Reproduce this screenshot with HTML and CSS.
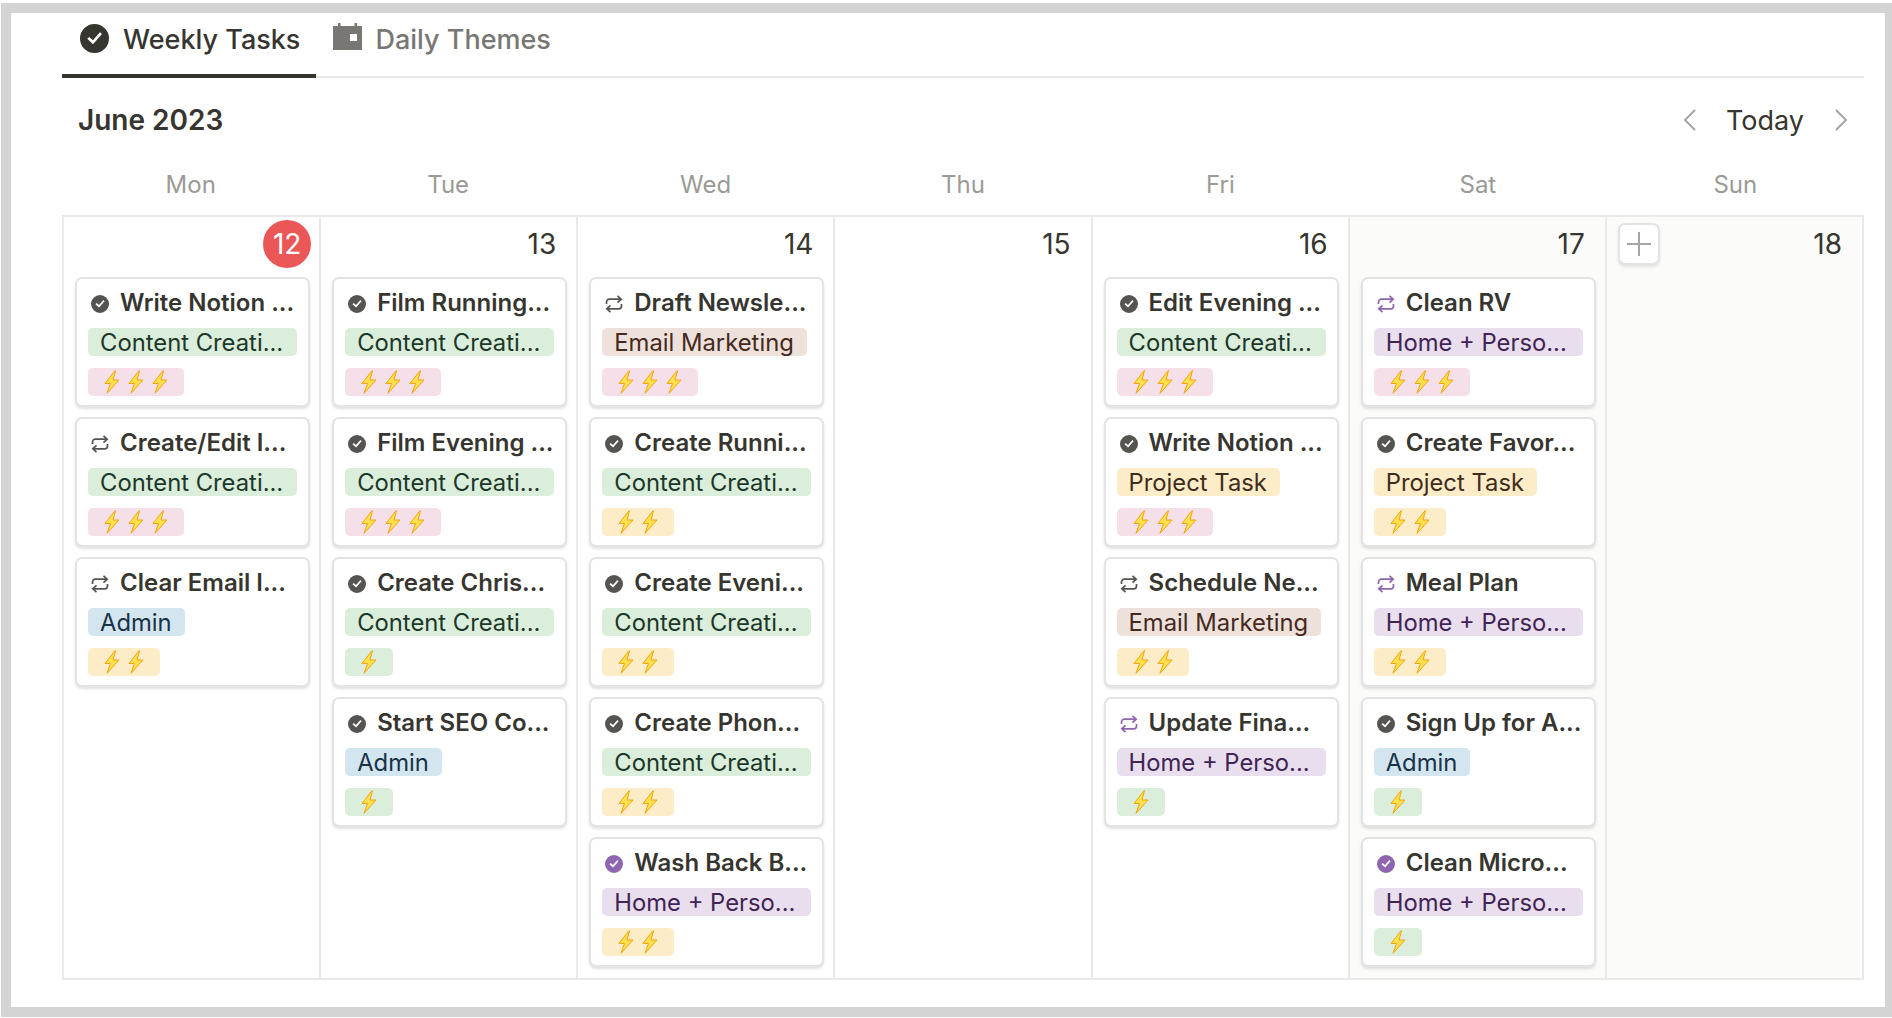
FILE: index.html
```html
<!DOCTYPE html>
<html lang="en">

<head>
  <meta charset="UTF-8">
  <meta name="viewport" content="width=device-width, initial-scale=1.0">
  <title>Weekly Tasks</title>
  <link rel="stylesheet" href="styles.css">
</head>

<body>

  <svg class="defs" width="0" height="0">
    <symbol id="check" viewBox="0 0 18 18">
      <path fill-rule="evenodd" d="M9 0a9 9 0 1 1 0 18A9 9 0 0 1 9 0zm4.600 6.200-1.200-1.100-4.400 5-2.300-2.100-1.200 1.200 3.600 3.400z"/>
    </symbol>
    <symbol id="repeat" viewBox="0 0 18 18">
      <path fill="none" stroke="currentColor" stroke-width="1.700" d="M1.500 9V7c0-1.600 1.200-2.800 2.800-2.800H16M12.500 .8l3.700 3.400-3.700 3.400M16.500 9v2c0 1.600-1.200 2.800-2.800 2.800H2M5.500 10.400 1.800 13.800l3.700 3.400"/>
    </symbol>
    <symbol id="bolt" viewBox="0 0 16 24">
      <path fill="#ffe14d" stroke="#f7a30f" stroke-width="1" stroke-linejoin="round" d="M11 .7 1 13.500H6.500L3 23.300 15 10H9L11.500 .7z"/>
    </symbol>
    <symbol id="calendar" viewBox="0 0 29 27">
      <path fill-rule="evenodd" d="M5 0h2.500v3h14V0H24v3h5v24H0V3h5zm12 11v7h7v-7z"/>
    </symbol>
    <symbol id="chev-left" viewBox="0 0 13 22">
      <path fill="none" stroke="currentColor" stroke-width="2" d="M12 1 2 11l10 10"/>
    </symbol>
    <symbol id="chev-right" viewBox="0 0 13 22">
      <path fill="none" stroke="currentColor" stroke-width="2" d="m1 1 10 10L1 21"/>
    </symbol>
  </svg>

  <div class="frame">

    <div class="tabs">
      <div class="tab tab-active">
        <svg class="tab-icon"><use href="#check"/></svg>
        <span>Weekly Tasks</span>
      </div>
      <div class="tab">
        <svg class="tab-icon tab-icon-cal"><use href="#calendar"/></svg>
        <span>Daily Themes</span>
      </div>
    </div>

    <div class="month-row">
      <div class="month">June 2023</div>
      <div class="nav">
        <svg class="chev"><use href="#chev-left"/></svg>
        <span class="today">Today</span>
        <svg class="chev"><use href="#chev-right"/></svg>
      </div>
    </div>

    <div class="weekdays">
      <div>Mon</div>
      <div>Tue</div>
      <div>Wed</div>
      <div>Thu</div>
      <div>Fri</div>
      <div>Sat</div>
      <div>Sun</div>
    </div>

    <div class="grid">

      <!-- Mon -->
      <div class="day">
        <div class="date"><span class="date-today">12</span></div>

        <div class="card">
          <div class="title"><svg class="ico"><use href="#check"/></svg><span>Write Notion ...</span></div>
          <div class="tag green">Content Creati...</div>
          <div class="tag bolts pink"><svg><use href="#bolt"/></svg><svg><use href="#bolt"/></svg><svg><use href="#bolt"/></svg></div>
        </div>

        <div class="card">
          <div class="title"><svg class="ico"><use href="#repeat"/></svg><span>Create/Edit I...</span></div>
          <div class="tag green">Content Creati...</div>
          <div class="tag bolts pink"><svg><use href="#bolt"/></svg><svg><use href="#bolt"/></svg><svg><use href="#bolt"/></svg></div>
        </div>

        <div class="card">
          <div class="title"><svg class="ico"><use href="#repeat"/></svg><span>Clear Email I...</span></div>
          <div class="tag blue">Admin</div>
          <div class="tag bolts yellow"><svg><use href="#bolt"/></svg><svg><use href="#bolt"/></svg></div>
        </div>
      </div>

      <!-- Tue -->
      <div class="day">
        <div class="date">13</div>

        <div class="card">
          <div class="title"><svg class="ico"><use href="#check"/></svg><span>Film Running...</span></div>
          <div class="tag green">Content Creati...</div>
          <div class="tag bolts pink"><svg><use href="#bolt"/></svg><svg><use href="#bolt"/></svg><svg><use href="#bolt"/></svg></div>
        </div>

        <div class="card">
          <div class="title"><svg class="ico"><use href="#check"/></svg><span>Film Evening ...</span></div>
          <div class="tag green">Content Creati...</div>
          <div class="tag bolts pink"><svg><use href="#bolt"/></svg><svg><use href="#bolt"/></svg><svg><use href="#bolt"/></svg></div>
        </div>

        <div class="card">
          <div class="title"><svg class="ico"><use href="#check"/></svg><span>Create Chris...</span></div>
          <div class="tag green">Content Creati...</div>
          <div class="tag bolts green"><svg><use href="#bolt"/></svg></div>
        </div>

        <div class="card">
          <div class="title"><svg class="ico"><use href="#check"/></svg><span>Start SEO Co...</span></div>
          <div class="tag blue">Admin</div>
          <div class="tag bolts green"><svg><use href="#bolt"/></svg></div>
        </div>
      </div>

      <!-- Wed -->
      <div class="day">
        <div class="date">14</div>

        <div class="card">
          <div class="title"><svg class="ico"><use href="#repeat"/></svg><span>Draft Newsle...</span></div>
          <div class="tag brown">Email Marketing</div>
          <div class="tag bolts pink"><svg><use href="#bolt"/></svg><svg><use href="#bolt"/></svg><svg><use href="#bolt"/></svg></div>
        </div>

        <div class="card">
          <div class="title"><svg class="ico"><use href="#check"/></svg><span>Create Runni...</span></div>
          <div class="tag green">Content Creati...</div>
          <div class="tag bolts yellow"><svg><use href="#bolt"/></svg><svg><use href="#bolt"/></svg></div>
        </div>

        <div class="card">
          <div class="title"><svg class="ico"><use href="#check"/></svg><span>Create Eveni...</span></div>
          <div class="tag green">Content Creati...</div>
          <div class="tag bolts yellow"><svg><use href="#bolt"/></svg><svg><use href="#bolt"/></svg></div>
        </div>

        <div class="card">
          <div class="title"><svg class="ico"><use href="#check"/></svg><span>Create Phon...</span></div>
          <div class="tag green">Content Creati...</div>
          <div class="tag bolts yellow"><svg><use href="#bolt"/></svg><svg><use href="#bolt"/></svg></div>
        </div>

        <div class="card">
          <div class="title"><svg class="ico ico-purple"><use href="#check"/></svg><span>Wash Back B...</span></div>
          <div class="tag purple">Home + Perso...</div>
          <div class="tag bolts yellow"><svg><use href="#bolt"/></svg><svg><use href="#bolt"/></svg></div>
        </div>
      </div>

      <!-- Thu -->
      <div class="day">
        <div class="date">15</div>
      </div>

      <!-- Fri -->
      <div class="day">
        <div class="date">16</div>

        <div class="card">
          <div class="title"><svg class="ico"><use href="#check"/></svg><span>Edit Evening ...</span></div>
          <div class="tag green">Content Creati...</div>
          <div class="tag bolts pink"><svg><use href="#bolt"/></svg><svg><use href="#bolt"/></svg><svg><use href="#bolt"/></svg></div>
        </div>

        <div class="card">
          <div class="title"><svg class="ico"><use href="#check"/></svg><span>Write Notion ...</span></div>
          <div class="tag yellow">Project Task</div>
          <div class="tag bolts pink"><svg><use href="#bolt"/></svg><svg><use href="#bolt"/></svg><svg><use href="#bolt"/></svg></div>
        </div>

        <div class="card">
          <div class="title"><svg class="ico"><use href="#repeat"/></svg><span>Schedule Ne...</span></div>
          <div class="tag brown">Email Marketing</div>
          <div class="tag bolts yellow"><svg><use href="#bolt"/></svg><svg><use href="#bolt"/></svg></div>
        </div>

        <div class="card">
          <div class="title"><svg class="ico ico-purple"><use href="#repeat"/></svg><span>Update Fina...</span></div>
          <div class="tag purple">Home + Perso...</div>
          <div class="tag bolts green"><svg><use href="#bolt"/></svg></div>
        </div>
      </div>

      <!-- Sat -->
      <div class="day weekend">
        <div class="date">17</div>

        <div class="card">
          <div class="title"><svg class="ico ico-purple"><use href="#repeat"/></svg><span>Clean RV</span></div>
          <div class="tag purple">Home + Perso...</div>
          <div class="tag bolts pink"><svg><use href="#bolt"/></svg><svg><use href="#bolt"/></svg><svg><use href="#bolt"/></svg></div>
        </div>

        <div class="card">
          <div class="title"><svg class="ico"><use href="#check"/></svg><span>Create Favor...</span></div>
          <div class="tag yellow">Project Task</div>
          <div class="tag bolts yellow"><svg><use href="#bolt"/></svg><svg><use href="#bolt"/></svg></div>
        </div>

        <div class="card">
          <div class="title"><svg class="ico ico-purple"><use href="#repeat"/></svg><span>Meal Plan</span></div>
          <div class="tag purple">Home + Perso...</div>
          <div class="tag bolts yellow"><svg><use href="#bolt"/></svg><svg><use href="#bolt"/></svg></div>
        </div>

        <div class="card">
          <div class="title"><svg class="ico"><use href="#check"/></svg><span>Sign Up for A...</span></div>
          <div class="tag blue">Admin</div>
          <div class="tag bolts green"><svg><use href="#bolt"/></svg></div>
        </div>

        <div class="card">
          <div class="title"><svg class="ico ico-purple"><use href="#check"/></svg><span>Clean Micro...</span></div>
          <div class="tag purple">Home + Perso...</div>
          <div class="tag bolts green"><svg><use href="#bolt"/></svg></div>
        </div>
      </div>

      <!-- Sun -->
      <div class="day weekend">
        <div class="date date-add">
          <div class="add-btn">
            <svg width="24" height="24" viewBox="0 0 24 24"><path fill="none" stroke="currentColor" stroke-width="2" d="M12 0v24M0 12h24"/></svg>
          </div>
          <span>18</span>
        </div>
      </div>

    </div>
  </div>

</body>

</html>
```
FILE: styles.css
```css
:root {
  --ink: #37352f;
  --grey: #9b9a97;
  --line: #e9e9e7;
  --frame: #d4d4d4;
}

* {
  margin: 0;
  padding: 0;
  box-sizing: border-box;
}

body {
  background: #fff;
  font-family: Inter, "Noto Sans", sans-serif;
  color: var(--ink);
}

.defs {
  position: absolute;
}

.frame {
  height: 1014px;
  margin: 3px 0 0 1px;
  padding: 0 21px 0 51px;
  border: 10px solid var(--frame);
  border-right-width: 7px;
  background: #fff;
}

/* tabs */

.tabs {
  display: flex;
  height: 65px;
  border-bottom: 2px solid var(--line);
}

.tab {
  display: flex;
  align-items: center;
  gap: 13px;
  height: 65px;
  padding: 0 17px 12px;
  font-size: 27px;
  font-weight: 500;
  color: #787774;
}

.tab-active {
  padding: 0 16px 8px 18px;
  gap: 14px;
  color: var(--ink);
  border-bottom: 4px solid var(--ink);
}

.tab-icon {
  width: 29px;
  height: 29px;
  margin-top: -2px;
  fill: currentColor;
}

.tab-icon-cal {
  margin-top: -6px;
}

/* month header */

.month-row {
  display: flex;
  justify-content: space-between;
  align-items: center;
  height: 84px;
  padding: 0 16px 0 16px;
}

.month {
  font-size: 28px;
  font-weight: 600;
}

.nav {
  display: flex;
  align-items: center;
  gap: 30px;
  color: #a5a5a3;
}

.today {
  margin-right: 1px;
  font-size: 27px;
  color: var(--ink);
}

.chev {
  width: 13px;
  height: 22px;
}

.weekdays {
  display: grid;
  grid-template-columns: repeat(7, minmax(0, 1fr));
  margin-bottom: 8px;
  padding-top: 1px;
  line-height: 44px;
  font-size: 24px;
  text-align: center;
  color: var(--grey);
}

/* calendar */

.grid {
  display: grid;
  grid-template-columns: repeat(7, minmax(0, 1fr));
  height: 765px;
  border: solid var(--line);
  border-width: 2px 2px 2px 0;
}

.day {
  padding: 0 9px 0 11px;
  border-left: 2px solid var(--line);
}

.weekend {
  background: #fbfbfa;
}

.date {
  display: flex;
  justify-content: flex-end;
  align-items: center;
  height: 60px;
  padding: 0 11px 6px 0;
  font-size: 28px;
}

.date-today {
  display: flex;
  justify-content: center;
  align-items: center;
  width: 48px;
  height: 48px;
  margin-right: -12px;
  border-radius: 50%;
  background: #eb5757;
  color: #fff;
}

.date-add {
  justify-content: space-between;
  padding-left: 0;
}

.add-btn {
  display: flex;
  justify-content: center;
  align-items: center;
  width: 42px;
  height: 42px;
  border: 2px solid #e3e3e1;
  border-radius: 7px;
  background: #fff;
  box-shadow: 0 2px 3px rgba(0, 0, 0, .1);
  color: #a5a5a3;
}

.card {
  height: 130px;
  margin-bottom: 10px;
  padding: 10px 11px 0;
  border: 2px solid #e3e3e1;
  border-radius: 7px;
  background: #fff;
  box-shadow: 0 2px 3px rgba(0, 0, 0, .12);
}

.title {
  display: flex;
  align-items: center;
  gap: 11px;
  height: 26px;
  margin-bottom: 13px;
  padding-left: 3px;
  font-size: 24px;
  font-weight: 600;
  white-space: nowrap;
}

.ico {
  flex: none;
  width: 18px;
  height: 18px;
  margin-top: 4px;
  fill: #555450;
  color: #555450;
}

.ico-purple {
  fill: #9065b0;
  color: #9065b0;
}

.tag {
  width: fit-content;
  height: 28px;
  margin-bottom: 12px;
  padding: 1px 13px 0 12px;
  border-radius: 5px;
  font-size: 23.800px;
  line-height: 28px;
  white-space: nowrap;
}

/* cut-off labels fill the card */
.tag.green:not(.bolts), .tag.purple {
  width: 100%;
}

.bolts {
  display: flex;
  align-items: center;
  gap: 8px;
  padding: 0 16px;
}

.bolts svg {
  width: 16px;
  height: 24px;
}

.green {
  background: #dbeddb;
  color: #1c3829;
}

.pink {
  background: #f5e0e9;
  color: #4c2337;
}

.yellow {
  background: #fdecc8;
  color: #402c1b;
}

.blue {
  background: #d3e5ef;
  color: #183347;
}

.purple {
  background: #e8deee;
  color: #412454;
}

.brown {
  background: #eee0da;
  color: #442a1e;
}
```
